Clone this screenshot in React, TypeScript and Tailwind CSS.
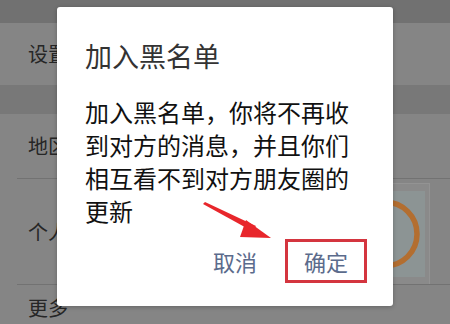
import React from 'react';

const FONT = { fontFamily: '"Noto Sans CJK SC", "Noto Sans", sans-serif' };

function RingCard() {
  return (
    <div className="mr-[20px] mt-[4px] flex h-[102px] w-[90px] items-center justify-center border border-[#939393] bg-[#8a8a8a]">
      <div className="flex h-[86px] w-[80px] items-center justify-center bg-[#8c9494]">
        <svg width="74" height="74" viewBox="0 0 74 74">
          <circle cx="37" cy="37" r="32" fill="none" stroke="#b36e30" strokeWidth="5.5" />
        </svg>
      </div>
    </div>
  );
}

function Arrow() {
  return (
    <svg className="absolute left-[200px] top-[200px]" width="75" height="42" viewBox="0 0 75 42">
      {/* tapering shaft */}
      <polygon points="3,4 5,2 56,26 52,31" fill="#e8262b" />
      {/* head */}
      <polygon points="46,20 71,38 40,37" fill="#e8262b" />
    </svg>
  );
}

export default function App() {
  return (
    <div className="relative h-[324px] w-[450px] overflow-hidden bg-[#858585]" style={FONT}>
      {/* dimmed settings page behind */}
      <div className="flex h-full flex-col">
        <div className="h-[24px] bg-[#717171]" />
        <div className="flex h-[64px] items-center pl-[28px] text-[20px] text-[#262626]">设置</div>
        <div className="h-[30px] bg-[#787878]" />
        <div className="flex h-[67px] items-center pl-[28px] text-[20px] text-[#262626]">地区</div>
        <div className="ml-[17px] h-px bg-[#727272]" />
        <div className="flex h-[105px] items-center justify-between pl-[28px] text-[20px] text-[#262626]">
          <span>个人</span>
          <RingCard />
        </div>
        <div className="ml-[17px] h-px bg-[#727272]" />
        <div className="flex h-[40px] items-start pl-[28px] pt-[8px] text-[20px] text-[#262626]">更多</div>
      </div>

      {/* dialog */}
      <div className="absolute left-[57px] top-[7px] flex h-[299px] w-[336px] flex-col rounded-[3px] bg-white shadow-[0_1px_4px_rgba(0,0,0,0.25)]">
        <div className="pl-[28px] pt-[31px] text-[27px] leading-[36px] text-[#333333]">加入黑名单</div>
        <div className="pl-[28px] pt-[21px] text-[24px] leading-[33px] text-[#111111]">
          加入黑名单，你将不再收
          <br />
          到对方的消息，并且你们
          <br />
          相互看不到对方朋友圈的
          <br />
          更新
        </div>
        <div className="flex items-center justify-end gap-[28px] pr-[26px] pt-[12px]">
          <span className="text-[22px] leading-[30px] text-[#5b6b8c]">取消</span>
          <span className="flex h-[44px] w-[82px] items-center justify-center border-[3px] border-[#d4353f] text-[22px] leading-[30px] text-[#5b6b8c]">
            确定
          </span>
        </div>
      </div>

      <Arrow />
    </div>
  );
}
